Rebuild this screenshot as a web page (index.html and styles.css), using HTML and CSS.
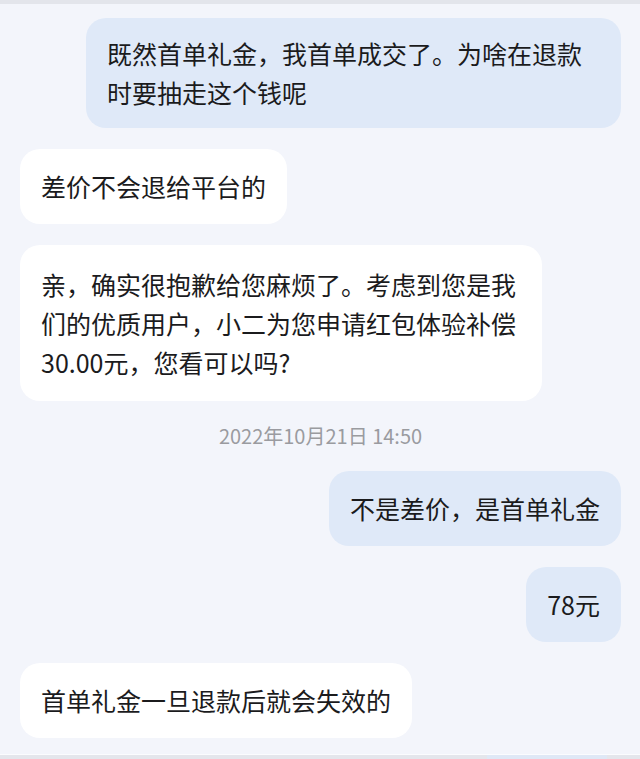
FILE: index.html
```html
<!DOCTYPE html>
<html lang="zh-CN">
<head>
    <meta charset="UTF-8">
    <meta name="viewport" content="width=device-width, initial-scale=1.0">
    <title>聊天记录</title>
    <link rel="stylesheet" href="styles.css">
</head>
<body>
    <div class="screen">
        <div class="top-edge"></div>
        <main class="chat">
            <div class="row mine">
                <div class="bubble first">既然首单礼金，我首单成交了。为啥在退款时要抽走这个钱呢</div>
            </div>
            <div class="row theirs">
                <div class="bubble">差价不会退给平台的</div>
            </div>
            <div class="row theirs">
                <div class="bubble offer">亲，确实很抱歉给您麻烦了。考虑到您是我们的优质用户，小二为您申请红包体验补偿30.00元，您看可以吗?</div>
            </div>
            <div class="time">2022年10月21日 14:50</div>
            <div class="row mine">
                <div class="bubble">不是差价，是首单礼金</div>
            </div>
            <div class="row mine">
                <div class="bubble">78元</div>
            </div>
            <div class="row theirs">
                <div class="bubble">首单礼金一旦退款后就会失效的</div>
            </div>
        </main>
        <div class="bottom-edge">
            <div class="peek"></div>
        </div>
    </div>
</body>
</html>
```

FILE: styles.css
```css
/* Basis */
body {
    margin: 0;
    padding: 0;
    background-color: #f3f5fb;
    font-family: "Noto Sans CJK SC", "Noto Sans", sans-serif;
    color: #1b1b1d;
}

.screen {
    width: 640px;
    height: 759px;
    overflow: hidden;
    display: flex;
    flex-direction: column;
}

.top-edge {
    height: 4px;
    background-color: #e3e5eb;
}

/* Berichten */
.chat {
    flex: 1;
    padding: 14px 19px 0 20px;
    display: flex;
    flex-direction: column;
    gap: 21px;
}

.row {
    display: flex;
}
.row.mine {
    justify-content: flex-end;
}
.row.theirs {
    justify-content: flex-start;
}

.bubble {
    padding: 18px 21px;
    font-size: 25px;
    line-height: 39px;
    border-radius: 20px;
    background-color: #ffffff;
}
.bubble.first {
    max-width: 493px;
    padding-top: 16px;
    padding-bottom: 16px;
}
.bubble.offer {
    max-width: 480px;
    padding-top: 20px;
    padding-bottom: 19px;
}
.mine .bubble {
    background-color: #dfe9f8;
}

.time {
    text-align: center;
    font-size: 20px;
    line-height: 28px;
    color: #9a9ba0;
}

.bottom-edge {
    height: 4px;
    border-top: 1px solid #fbfcfe;
    background-color: #e4e6ec;
    display: flex;
    justify-content: flex-end;
    padding-right: 33px;
}
.bottom-edge .peek {
    width: 120px;
    background-color: #dfe8f6;
}
```
